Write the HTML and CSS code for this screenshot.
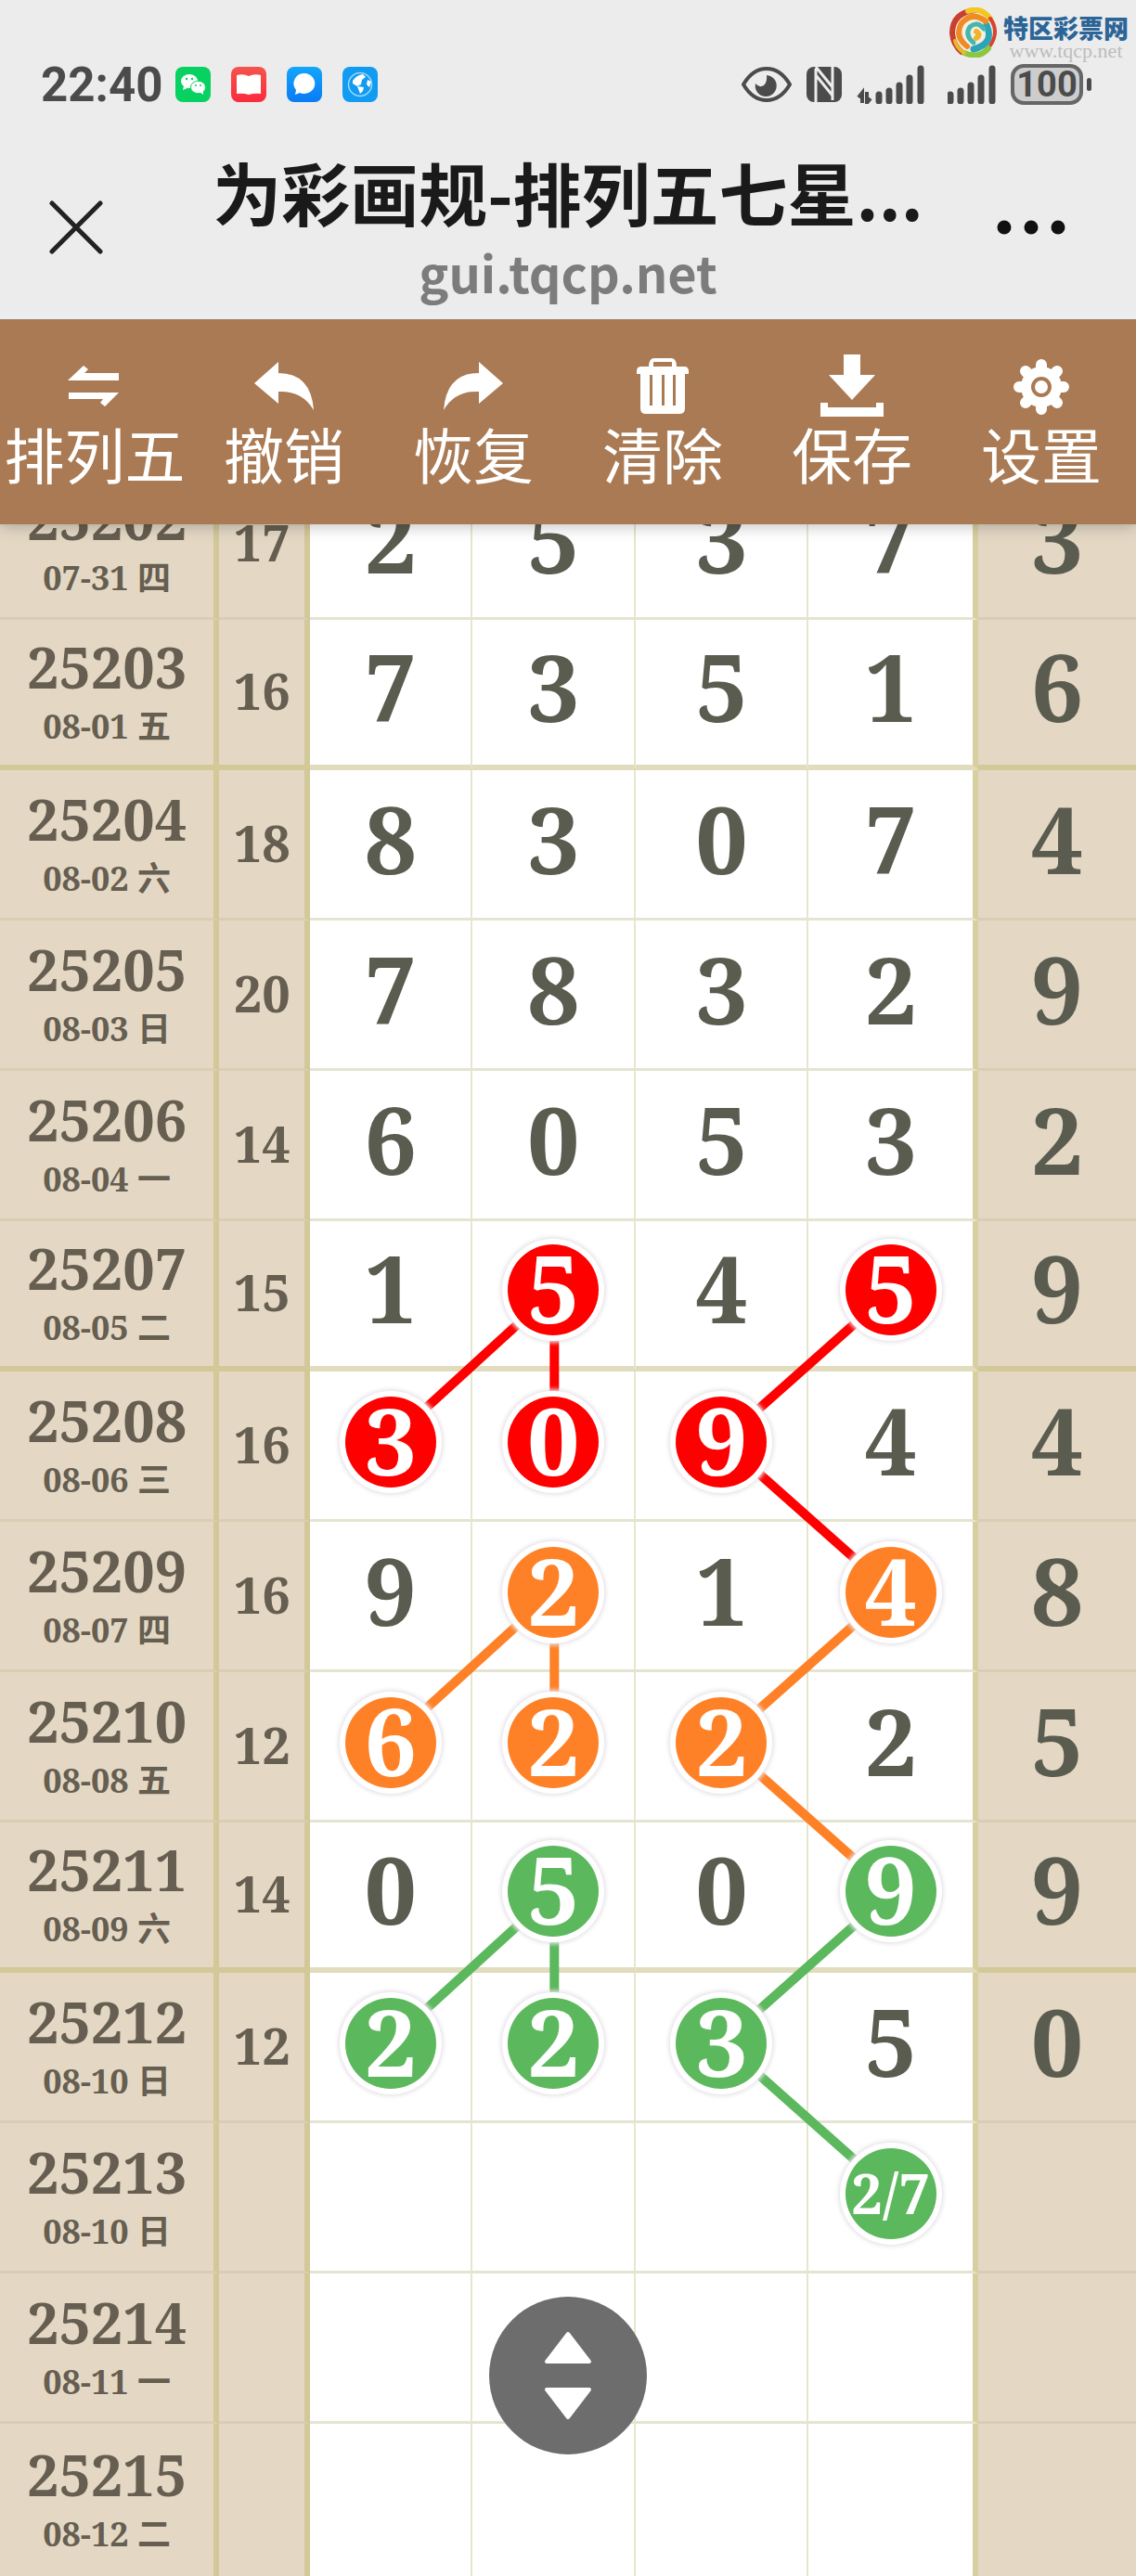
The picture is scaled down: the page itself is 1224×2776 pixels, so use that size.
FILE: index.html
```html
<!DOCTYPE html>
<html lang="zh-CN">

<head>
    <meta charset="UTF-8">
    <meta name="viewport" content="width=device-width, initial-scale=1.0">
    <title>为彩画规-排列五七星彩</title>
    <link rel="stylesheet" href="styles.css">
</head>

<body>
    <header class="header">
        <div class="status-bar">
            <span class="clock">22:40</span>
            <div class="apps">
                <svg class="app" viewBox="0 0 38 38">
                    <rect width="38" height="38" rx="8" fill="#07d160"/>
                    <ellipse cx="15" cy="15.500" rx="9" ry="7.500" fill="#fff"/>
                    <path d="M9 21l-1 4 5-2z" fill="#fff"/>
                    <ellipse cx="24.500" cy="22" rx="8" ry="6.700" fill="#fff" stroke="#07d160"/>
                    <path d="M26 27l4 3 0-4z" fill="#fff"/>
                    <g fill="#07d160"><circle cx="12" cy="13" r="1.200"/><circle cx="18" cy="13" r="1.200"/><circle cx="22" cy="20" r="1"/><circle cx="27" cy="20" r="1"/></g>
                </svg>
                <svg class="app" viewBox="0 0 38 38">
                    <defs><linearGradient id="red" x2="0" y2="1"><stop stop-color="#f5544c"/><stop offset="1" stop-color="#fb2b3c"/></linearGradient></defs>
                    <rect width="38" height="38" rx="8" fill="url(#red)"/>
                    <path d="M6 9q7-2 13 1 6-3 13-1v20q-7-1-13 1-6-2-13-1z" fill="#fff"/>
                </svg>
                <svg class="app" viewBox="0 0 38 38">
                    <defs><linearGradient id="blue" x2="0" y2="1"><stop stop-color="#12a6fb"/><stop offset="1" stop-color="#0a7bf5"/></linearGradient></defs>
                    <rect width="38" height="38" rx="8" fill="url(#blue)"/>
                    <path d="M19 7a11.500 11 0 1 1-5 21l-5 2 1-5a11 11 0 0 1 9-18z" fill="#fff"/>
                </svg>
                <svg class="app" viewBox="0 0 38 38">
                    <rect width="38" height="38" rx="8" fill="#119cf2"/>
                    <circle cx="19" cy="19" r="12.500" fill="none" stroke="#9fd8fb" stroke-width="1.500"/>
                    <path d="M11 15q4-6 11-7l3 3-4 3-1 5-4 2-5-3zM16 21l7 1-1 4-3 3zM27 14l4 2-2 6-3-3z" fill="#fff"/>
                </svg>
            </div>
            <div class="indicators">
                <svg width="54" height="38" viewBox="0 0 54 38">
                    <path d="M2 19Q12 2 27 2t25 17Q42 36 27 36T2 19z" fill="none" stroke="#4b4b4b" stroke-width="4"/>
                    <path d="M27 9a11.500 11.500 0 1 1-12 9q4 5 9 2 4-4 3-11z" fill="#4b4b4b"/>
                </svg>
                <svg width="38" height="38" viewBox="0 0 38 38">
                    <rect width="38" height="38" rx="8" fill="#4b4b4b"/>
                    <path d="M10 2v36M28 0v36M10 0l18 22M10 9l18 22" fill="none" stroke="#ececec" stroke-width="3"/>
                </svg>
                <svg class="signal" width="74" height="42" viewBox="0 0 74 42">
                    <path d="M24 39v-7M35 39V28M46 39V22M57 39V14M69 39V4" class="bars"/>
                    <path d="M6 41V30l-4 5M11 29v12l4-5" class="arrows"/>
                </svg>
                <svg width="52" height="42" viewBox="0 0 52 42">
                    <path d="M3 39v-7M14 39V28M25 39V22M36 39V14M48 39V4" class="bars"/>
                </svg>
                <span class="battery">100</span>
            </div>
        </div>
        <a class="brand" href="#">
            <svg width="52" height="54" viewBox="0 0 52 54">
                <ellipse cx="26" cy="27" rx="25" ry="26" fill="#f4efe0"/>
                <g fill="none" stroke-linecap="round">
                    <path d="M29 3Q3 5 3 28q1 12 10 20" stroke="#c8402f" stroke-width="6"/>
                    <path d="M20 4Q34-1 44 12" stroke="#f5c623" stroke-width="6"/>
                    <path d="M44 12q10 14 0 29" stroke="#d8432e" stroke-width="4"/>
                    <path d="M42 44Q32 56 16 49" stroke="#8dc63f" stroke-width="6"/>
                    <path d="M16 49Q8 44 6 36" stroke="#e8b92c" stroke-width="4"/>
                    <path d="M40 19q9 20-14 26" stroke="#2aa5b8" stroke-width="7"/>
                    <path d="M39 15Q25 4 13 17q-8 14 6 25" stroke="#f08a24" stroke-width="6"/>
                    <path d="M37 23q-7-9-15-2-6 9 4 17" stroke="#46b6ae" stroke-width="5"/>
                    <path d="M29 26q5 3 0 7" stroke="#f3b229" stroke-width="6"/>
                </g>
            </svg>
            <span class="brand-text">
                <strong>特区彩票网</strong>
                <small>www.tqcp.net</small>
            </span>
        </a>
        <div class="title-bar">
            <button type="button" class="close" aria-label="关闭">
                <svg width="58" height="58" viewBox="0 0 58 58"><path d="M3 3l52 52M55 3L3 55" stroke="#222" stroke-width="5" stroke-linecap="round"/></svg>
            </button>
            <div class="title">
                <h1>为彩画规-排列五七星...</h1>
                <p>gui.tqcp.net</p>
            </div>
            <button type="button" class="more" aria-label="更多">
                <svg width="74" height="16" viewBox="0 0 74 16"><g fill="#111"><circle cx="8" cy="8" r="7.500"/><circle cx="37" cy="8" r="7.500"/><circle cx="66" cy="8" r="7.500"/></g></svg>
            </button>
        </div>
        <nav class="toolbar">
            <button type="button">
                <svg viewBox="0 0 72 72"><path d="M7 30l17-16 5 4-4 4h37v8zM62 43L47 58l-5-4 3-4H8v-7z"/></svg>
                排列五
            </button>
            <button type="button">
                <svg viewBox="0 0 72 72"><path d="M4 33l26-23v12q35 0 38 40-12-21-38-20v13z"/></svg>
                撤销
            </button>
            <button type="button">
                <svg viewBox="0 0 72 72"><path d="M68 33L42 10v12Q7 22 4 62q12-21 38-20v13z"/></svg>
                恢复
            </button>
            <button type="button">
                <svg viewBox="0 0 72 72"><path fill-rule="evenodd" d="M8 20q0-5 5-5h8q0-9 6-9h18q6 0 6 9h8q5 0 5 5v3h-4v37q0 6-6 6H18q-6 0-6-6V23H8zM26 15h20v-5H26zM22 24v33h3V24zM35 24v33h3V24zM47 24v33h3V24z"/></svg>
                清除
            </button>
            <button type="button">
                <svg viewBox="0 0 72 72"><path d="M27 2h18v22h16L36 51 11 24h16zM2 54h8v5h52v-5h8v15H2z"/></svg>
                保存
            </button>
            <button type="button">
                <svg viewBox="0 0 72 72">
                    <path d="M36 13v48M12 37h48M19 20l34 34M53 20L19 54" stroke="#fff" stroke-width="12" stroke-linecap="round"/>
                    <circle cx="36" cy="37" r="22"/>
                    <circle cx="36" cy="37" r="9" fill="none" stroke="#a97a53" stroke-width="4"/>
                </svg>
                设置
            </button>
        </nav>
    </header>

    <main>
        <div class="chart">
            <svg class="links" width="100%" height="100%">
                <g stroke="#fe0000">
                    <line x1="48.8%" y1="885" x2="34.3%" y2="1047"/>
                    <line x1="48.8%" y1="885" x2="48.8%" y2="1047"/>
                    <line x1="78.5%" y1="885" x2="63.6%" y2="1047"/>
                    <line x1="63.6%" y1="1047" x2="78.5%" y2="1209"/>
                </g>
                <g stroke="#ff8127">
                    <line x1="48.8%" y1="1209" x2="34.3%" y2="1371"/>
                    <line x1="48.8%" y1="1209" x2="48.8%" y2="1371"/>
                    <line x1="78.5%" y1="1209" x2="63.6%" y2="1371"/>
                    <line x1="63.6%" y1="1371" x2="78.5%" y2="1533"/>
                </g>
                <g stroke="#5cb85c">
                    <line x1="48.8%" y1="1533" x2="34.3%" y2="1695"/>
                    <line x1="48.8%" y1="1533" x2="48.8%" y2="1695"/>
                    <line x1="78.5%" y1="1533" x2="63.6%" y2="1695"/>
                    <line x1="63.6%" y1="1695" x2="78.5%" y2="1857"/>
                </g>
            </svg>
            <table>
                <colgroup>
                    <col class="col-issue">
                    <col class="col-sum">
                    <col class="col-a">
                    <col class="col-b">
                    <col class="col-c">
                    <col class="col-d">
                    <col class="col-e">
                </colgroup>
                <tbody>
                    <tr>
                        <th scope="row">25202<small>07-31 四</small></th>
                        <td>17</td><td>2</td><td>5</td><td>3</td><td>7</td><td>3</td>
                    </tr>
                    <tr class="thick">
                        <th scope="row">25203<small>08-01 五</small></th>
                        <td>16</td><td>7</td><td>3</td><td>5</td><td>1</td><td>6</td>
                    </tr>
                    <tr>
                        <th scope="row">25204<small>08-02 六</small></th>
                        <td>18</td><td>8</td><td>3</td><td>0</td><td>7</td><td>4</td>
                    </tr>
                    <tr>
                        <th scope="row">25205<small>08-03 日</small></th>
                        <td>20</td><td>7</td><td>8</td><td>3</td><td>2</td><td>9</td>
                    </tr>
                    <tr>
                        <th scope="row">25206<small>08-04 一</small></th>
                        <td>14</td><td>6</td><td>0</td><td>5</td><td>3</td><td>2</td>
                    </tr>
                    <tr class="thick">
                        <th scope="row">25207<small>08-05 二</small></th>
                        <td>15</td><td>1</td><td><span class="ball red">5</span></td><td>4</td><td><span class="ball red">5</span></td><td>9</td>
                    </tr>
                    <tr>
                        <th scope="row">25208<small>08-06 三</small></th>
                        <td>16</td><td><span class="ball red">3</span></td><td><span class="ball red">0</span></td><td><span class="ball red">9</span></td><td>4</td><td>4</td>
                    </tr>
                    <tr>
                        <th scope="row">25209<small>08-07 四</small></th>
                        <td>16</td><td>9</td><td><span class="ball orange">2</span></td><td>1</td><td><span class="ball orange">4</span></td><td>8</td>
                    </tr>
                    <tr>
                        <th scope="row">25210<small>08-08 五</small></th>
                        <td>12</td><td><span class="ball orange">6</span></td><td><span class="ball orange">2</span></td><td><span class="ball orange">2</span></td><td>2</td><td>5</td>
                    </tr>
                    <tr class="thick">
                        <th scope="row">25211<small>08-09 六</small></th>
                        <td>14</td><td>0</td><td><span class="ball green">5</span></td><td>0</td><td><span class="ball green">9</span></td><td>9</td>
                    </tr>
                    <tr>
                        <th scope="row">25212<small>08-10 日</small></th>
                        <td>12</td><td><span class="ball green">2</span></td><td><span class="ball green">2</span></td><td><span class="ball green">3</span></td><td>5</td><td>0</td>
                    </tr>
                    <tr>
                        <th scope="row">25213<small>08-10 日</small></th>
                        <td></td><td></td><td></td><td></td><td><span class="ball green pair">2/7</span></td><td></td>
                    </tr>
                    <tr>
                        <th scope="row">25214<small>08-11 一</small></th>
                        <td></td><td></td><td></td><td></td><td></td><td></td>
                    </tr>
                    <tr>
                        <th scope="row">25215<small>08-12 二</small></th>
                        <td></td><td></td><td></td><td></td><td></td><td></td>
                    </tr>
                </tbody>
            </table>
        </div>
    </main>

    <button type="button" class="scroller" aria-label="滚动">
        <svg width="56" height="96" viewBox="0 0 56 96"><path d="M28 3l23 30H5zM28 93l23-30H5z" fill="#fff" stroke="#fff" stroke-width="4" stroke-linejoin="round"/></svg>
    </button>
</body>

</html>
```
FILE: styles.css
```css
* {
    box-sizing: border-box;
}

body {
    margin: 0;
    background: #fff;
    font-family: "Noto Sans CJK SC", sans-serif;
}

button {
    padding: 0;
    border: 0;
    background: none;
    font-family: inherit;
}

/* header */
.header {
    position: relative;
    z-index: 10;
    background: #ececec;
    box-shadow: 0 2px 16px rgba(0, 0, 0, 0.25);
}

.status-bar {
    display: flex;
    align-items: center;
    height: 148px;
    padding: 34px 48px 0 44px;
    color: #4b4b4b;
}

.clock {
    font: 700 51px Roboto, sans-serif;
}

.apps {
    display: flex;
    gap: 22px;
    margin-left: 14px;
}

.app {
    width: 38px;
    height: 38px;
}

.indicators {
    display: flex;
    align-items: center;
    gap: 16px;
    margin-left: auto;
}

.signal {
    margin-right: 8px;
}

.bars {
    stroke: #4b4b4b;
    stroke-width: 7;
    stroke-linecap: round;
}

.arrows {
    fill: none;
    stroke: #4b4b4b;
    stroke-width: 4;
}

.battery {
    position: relative;
    width: 78px;
    margin-right: 9px;
    border: 4px solid #666;
    border-radius: 14px;
    background: #cdcdcd;
    font: 700 38px/36px Roboto, sans-serif;
    text-align: center;
}

.battery::after {
    content: "";
    position: absolute;
    top: 11px;
    right: -13px;
    width: 5px;
    height: 14px;
    border-radius: 3px;
    background: #4b4b4b;
}

.brand {
    position: absolute;
    top: 8px;
    right: 8px;
    display: flex;
    gap: 6px;
    text-decoration: none;
}

.brand-text {
    display: flex;
    flex-direction: column;
    padding-top: 8px;
}

.brand strong {
    color: #2b6497;
    font-size: 27px;
    font-weight: 900;
    line-height: 28px;
}

.brand small {
    color: #bdbdbd;
    font: 22px/22px "Liberation Serif", serif;
    text-align: center;
}

.title-bar {
    display: grid;
    grid-template-columns: 1fr auto 1fr;
    align-items: center;
    height: 196px;
    padding-top: 8px;
    border-bottom: 6px solid #e8eef2;
}

.close {
    justify-self: start;
    margin-left: 53px;
}

.more {
    justify-self: end;
    margin-right: 76px;
}

.title {
    text-align: center;
}

.title h1 {
    margin: 0;
    color: #1a1a1a;
    font-size: 74px;
    font-weight: 700;
    line-height: 92px;
}

.title p {
    margin: 0;
    color: #7c7c7c;
    font-size: 54px;
    font-weight: 700;
    line-height: 82px;
}

/* toolbar */
.toolbar {
    display: grid;
    grid-template-columns: repeat(6, 1fr);
    padding: 36px 0 40px;
    background: #a97a53;
}

.toolbar button {
    display: flex;
    flex-direction: column;
    align-items: center;
    color: #fff;
    font-size: 65px;
    line-height: 73px;
}

.toolbar svg {
    width: 72px;
    height: 72px;
    fill: #fff;
}

/* chart */
main {
    overflow: hidden;
}

.chart {
    position: relative;
    margin-top: -59px;
}

.links {
    position: absolute;
    top: 0;
    left: 0;
    stroke-width: 10;
}

table {
    width: 100%;
    table-layout: fixed;
    border-collapse: separate;
    border-spacing: 0;
    color: #5b5c50;
    font-family: "Noto Serif", "Noto Sans CJK SC", serif;
    font-weight: 700;
    text-align: center;
}

.col-issue {
    width: 19.3%;
}

.col-sum {
    width: 8%;
}

.col-a {
    width: 14.3%;
}

.col-b {
    width: 14.4%;
}

.col-c {
    width: 15.2%;
}

.col-d {
    width: 14.9%;
}

.col-e {
    width: 13.9%;
}

th,
td {
    height: 162px;
    padding: 0 0 14px;
    border-right: 2px solid #e6e6cf;
    border-bottom: 3px solid #e4e4d0;
    font-size: 100px;
    line-height: 100px;
}

th,
td:nth-child(2),
td:last-child {
    background: #e4d8c5;
    border-bottom-color: #d9cdb3;
}

th,
td:nth-child(2) {
    border-right: 6px solid #d3c898;
    color: #665e50;
}

td:nth-child(6) {
    border-right: 6px solid #d8cfa0;
}

td:last-child {
    border-right: 0;
}

.thick th,
.thick td {
    border-bottom: 6px solid #e0dcbd;
}

.thick th,
.thick td:nth-child(2),
.thick td:last-child {
    border-bottom-color: #d3c898;
}

tr:last-child th,
tr:last-child td {
    height: 164px;
    border-bottom: 0;
}

th {
    padding: 8px 0 0;
    font-size: 61px;
    line-height: 66px;
}

th small {
    display: block;
    font-size: 36px;
    line-height: 62px;
}

td:nth-child(2) {
    padding: 0 0 4px;
    font-size: 54px;
}

.ball {
    position: relative;
    display: block;
    width: 98px;
    height: 98px;
    margin: 6px auto 0;
    border-radius: 50%;
    box-shadow: 0 0 0 6px #fff, 0 0 4px 8px #e8e4ea;
    color: #fff;
    line-height: 92px;
}

.red {
    background: #fe0000;
}

.orange {
    background: #ff8127;
}

.green {
    background: #5cb85c;
}

.pair {
    font-size: 60px;
    line-height: 96px;
}

.scroller {
    position: fixed;
    left: 50%;
    bottom: 131px;
    z-index: 5;
    display: flex;
    align-items: center;
    justify-content: center;
    width: 170px;
    height: 170px;
    margin-left: -85px;
    border-radius: 50%;
    background: #6d6d6d;
}
```
